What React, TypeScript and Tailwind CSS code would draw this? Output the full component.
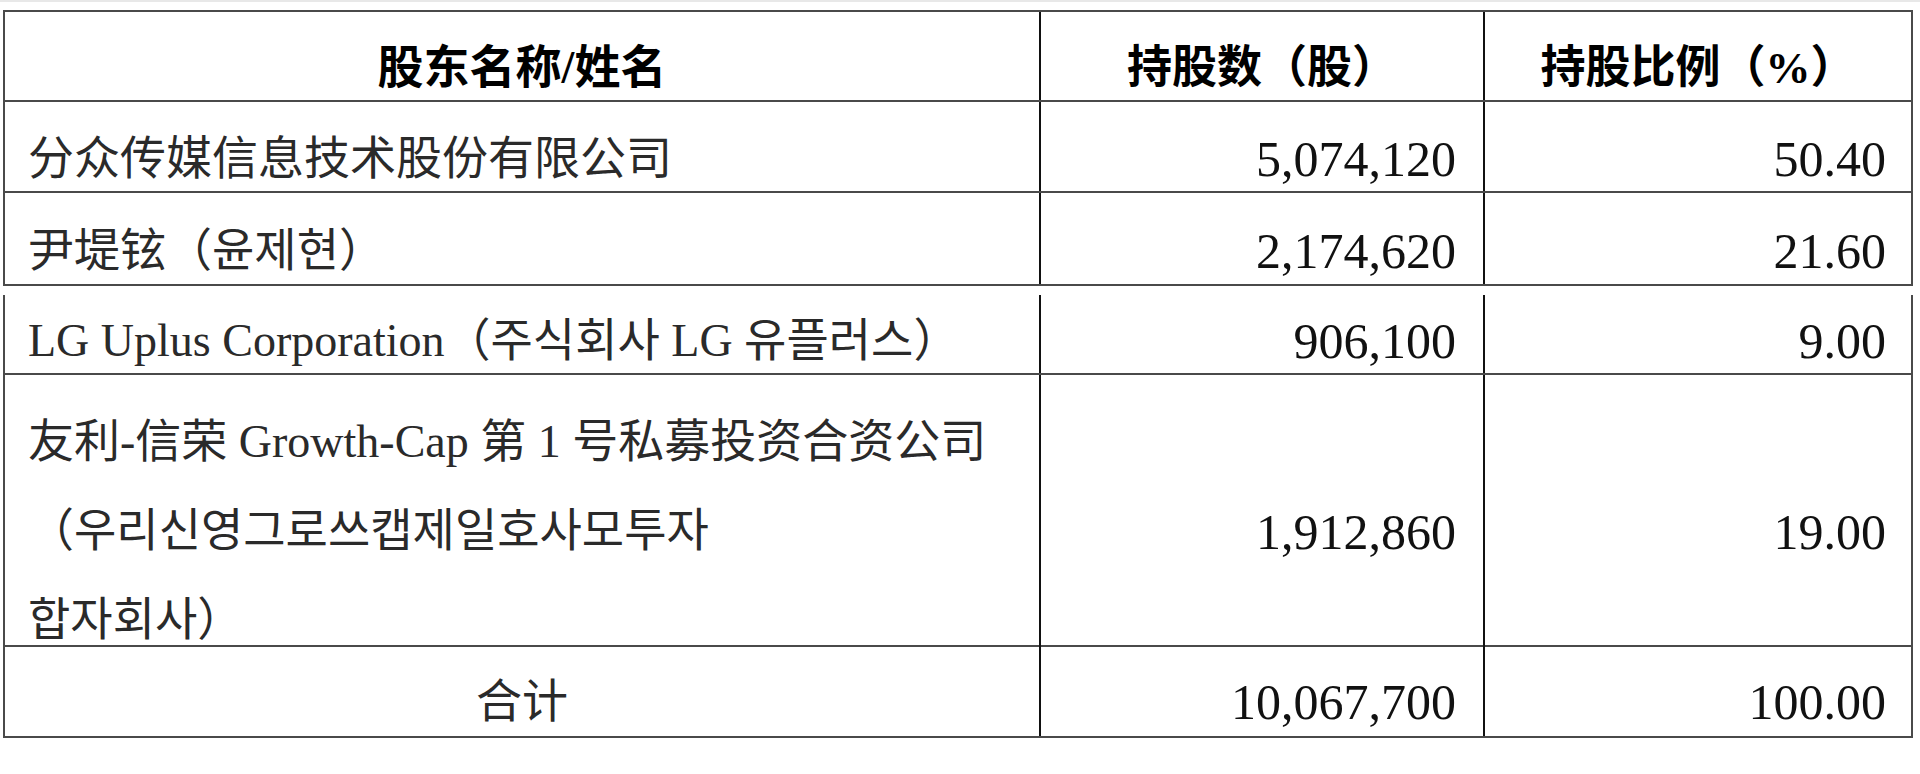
import React from 'react';

type RowProps = {
  height: string;
  last?: boolean;
  name: React.ReactNode;
  shares: string;
  ratio: string;
  shift?: string;
  header?: boolean;
  center?: boolean;
};

const Row: React.FC<RowProps> = ({ height, last, name, shares, ratio, shift = 'pt-6', header, center }) => {
  const line = last ? '' : 'border-b-2 border-[#4a4a4a]';
  if (header) {
    return (
      <div className={`grid grid-cols-[1034px_444px_428px] ${height} ${line}`}>
        <div className={`flex items-center justify-center ${shift} text-[46px] leading-[60px] font-bold text-black`}>{name}</div>
        <div className={`flex items-center justify-center ${shift} border-l-2 border-[#111] text-[45px] leading-[60px] font-bold text-black`}>{shares}</div>
        <div className={`flex items-center justify-center ${shift} border-l-2 border-[#111] text-[45px] leading-[60px] font-bold text-black`}>{ratio}</div>
      </div>
    );
  }
  return (
    <div className={`grid grid-cols-[1034px_444px_428px] ${height} ${line}`}>
      <div className={`flex items-center ${center ? 'justify-center' : 'pl-[23px]'} ${shift} text-[46px] leading-[60px] text-[#2a2a2a]`}>{name}</div>
      <div className={`flex items-center justify-end pr-[27px] ${shift} border-l-2 border-[#111] text-[50px] leading-[60px] text-[#111]`}>{shares}</div>
      <div className={`flex items-center justify-end pr-[25px] ${shift} border-l-2 border-[#111] text-[50px] leading-[60px] text-[#111]`}>{ratio}</div>
    </div>
  );
};

export default function App() {
  return (
    <div className="min-h-screen bg-white border-t-2 border-[#e8e8e8] pt-2 pl-[3px] font-['Liberation_Serif','Noto_Sans_CJK_SC',serif]">
      <div className="w-[1910px]">
        {/* first part of the table, before the page break */}
        <div className="border-2 border-[#4a4a4a]">
          <Row header height="h-[90px]" shift="pt-6" name="股东名称/姓名" shares="持股数（股）" ratio="持股比例（%）" />
          <Row height="h-[91px]" name="分众传媒信息技术股份有限公司" shares="5,074,120" ratio="50.40" />
          <Row last height="h-[91px]" name="尹堤铉（윤제현）" shares="2,174,620" ratio="21.60" />
        </div>

        {/* continued part: no top rule */}
        <div className="mt-[9px] border-2 border-t-0 border-[#4a4a4a]">
          <Row
            height="h-[80px]"
            shift="pt-[13px]"
            name="LG Uplus Corporation（주식회사 LG 유플러스）"
            shares="906,100"
            ratio="9.00"
          />
          <div className="grid grid-cols-[1034px_444px_428px] h-[272px] border-b-2 border-[#4a4a4a]">
            <div className="flex items-center pl-[23px] pt-[22px] text-[46px] leading-[89px] text-[#2a2a2a]">
              <div>
                友利-信荣 Growth-Cap 第 1 号私募投资合资公司
                <br />
                （우리신영그로쓰캡제일호사모투자
                <br />
                합자회사）
              </div>
            </div>
            <div className="flex items-center justify-end pr-[27px] pt-6 border-l-2 border-[#111] text-[50px] leading-[60px] text-[#111]">1,912,860</div>
            <div className="flex items-center justify-end pr-[25px] pt-6 border-l-2 border-[#111] text-[50px] leading-[60px] text-[#111]">19.00</div>
          </div>
          <Row last center height="h-[89px]" shift="pt-5" name="合计" shares="10,067,700" ratio="100.00" />
        </div>
      </div>
    </div>
  );
}
